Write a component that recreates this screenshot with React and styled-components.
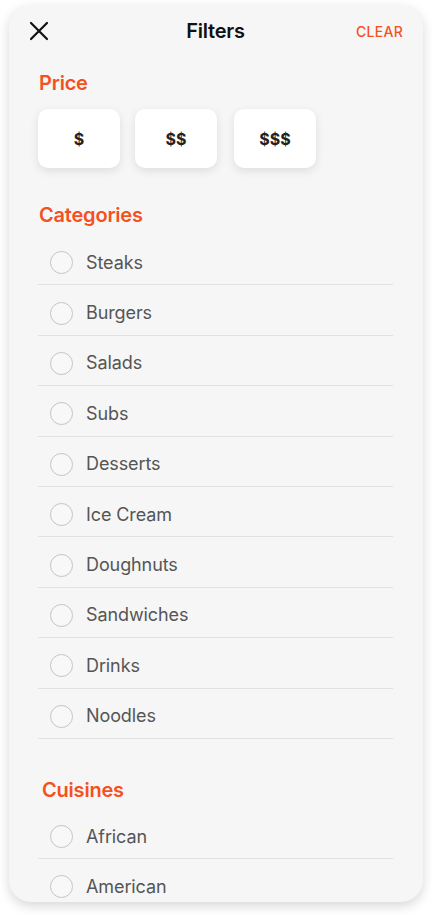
import React from 'react';
import styled, { createGlobalStyle } from 'styled-components';

const GlobalStyle = createGlobalStyle`
  html, body {
    margin: 0;
    padding: 0;
    background: #ffffff;
    font-family: Inter, "Noto Sans", sans-serif;
  }
`;

const Page = styled.div`
  width: 432px;
  height: 915px;
  padding: 5px 9px 13px;
  box-sizing: border-box;
`;

const Card = styled.div`
  height: 897px;
  background: #f6f6f6;
  border-radius: 22px;
  box-shadow: 0 4px 12px rgba(0, 0, 0, 0.16);
  overflow: hidden;
  padding: 0 30px 0 29px;
  box-sizing: border-box;
`;

const Header = styled.div`
  height: 52px;
  display: flex;
  align-items: center;
  justify-content: space-between;
  margin: 0 -10px 0 -10px;
`;

const IconButton = styled.button`
  width: 60px;
  height: 40px;
  padding: 0;
  border: none;
  background: none;
  display: flex;
  align-items: center;
  justify-content: flex-start;
  cursor: pointer;
`;

const Title = styled.h1`
  margin: 0;
  font-size: 20px;
  font-weight: 600;
  color: #111;
  letter-spacing: -0.2px;
`;

const ClearButton = styled.button`
  width: 60px;
  border: none;
  background: none;
  padding: 0;
  text-align: right;
  font-family: inherit;
  font-size: 14px;
  font-weight: 500;
  color: #f4511e;
  letter-spacing: 0.3px;
  cursor: pointer;
`;

const SectionTitle = styled.h2`
  margin: ${p => p.$top}px 0 0 ${p => p.$indent || 1}px;
  font-size: 20px;
  line-height: 24px;
  font-weight: 600;
  color: #f4511e;
  letter-spacing: -0.2px;
`;

const PriceRow = styled.div`
  display: flex;
  gap: 15px;
  margin-top: 14px;
`;

const PriceButton = styled.button`
  width: 82px;
  height: 59px;
  border: none;
  border-radius: 10px;
  background: #ffffff;
  box-shadow: 0 3px 10px rgba(0, 0, 0, 0.1);
  font-family: inherit;
  font-size: 16px;
  font-weight: 700;
  color: #222;
  cursor: pointer;
  &:nth-child(3) {
    margin-left: 2px;
  }
`;

const List = styled.ul`
  list-style: none;
  margin: ${p => p.$top}px 0 0;
  padding: 0;
`;

const Row = styled.li`
  height: 50.4px;
  box-sizing: border-box;
  padding: 16px 0 10px 12px;
  display: flex;
  align-items: center;
  gap: 13px;
  border-bottom: 1.5px solid #e2e2e2;
`;

const Radio = styled.span`
  width: 21px;
  height: 21px;
  border-radius: 50%;
  border: 1px solid #c4c4c4;
  background: #f8f8f8;
  flex-shrink: 0;
`;

const Label = styled.span`
  font-size: 18px;
  line-height: 24px;
  color: #555;
  letter-spacing: -0.1px;
`;

const categories = [
  'Steaks', 'Burgers', 'Salads', 'Subs', 'Desserts',
  'Ice Cream', 'Doughnuts', 'Sandwiches', 'Drinks', 'Noodles',
];

const cuisines = ['African', 'American'];

const CloseIcon = () => (
  <svg width="22" height="22" viewBox="0 0 22 22" fill="none">
    <path d="M3 3 L19 19 M19 3 L3 19" stroke="#111" strokeWidth="2.2" strokeLinecap="round" />
  </svg>
);

const OptionList = ({ items, top }) => (
  <List $top={top}>
    {items.map(item => (
      <Row key={item}>
        <Radio />
        <Label>{item}</Label>
      </Row>
    ))}
  </List>
);

const App = () => (
  <>
    <GlobalStyle />
    <Page>
      <Card>
        <Header>
          <IconButton aria-label="Close">
            <CloseIcon />
          </IconButton>
          <Title>Filters</Title>
          <ClearButton>CLEAR</ClearButton>
        </Header>

        <SectionTitle $top={14}>Price</SectionTitle>
        <PriceRow>
          <PriceButton>$</PriceButton>
          <PriceButton>$$</PriceButton>
          <PriceButton>$$$</PriceButton>
        </PriceRow>

        <SectionTitle $top={35}>Categories</SectionTitle>
        <OptionList items={categories} top={8} />

        <SectionTitle $top={39} $indent={4}>Cuisines</SectionTitle>
        <OptionList items={cuisines} top={7} />
      </Card>
    </Page>
  </>
);

export default App;
